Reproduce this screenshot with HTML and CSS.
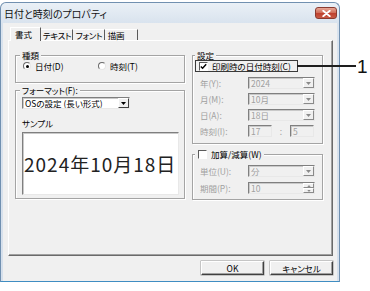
FILE: index.html
```html
<!DOCTYPE html>
<html lang="ja">
<head>
<meta charset="utf-8">
<title>日付と時刻のプロパティ</title>
<link rel="stylesheet" href="styles.css">
</head>
<body>
<div class="stage">
  <div class="window">
    <div class="titlebar">
      <span class="title">日付と時刻のプロパティ</span>
      <span class="close"><svg width="9" height="7" viewBox="0 0 9 7"><path d="M1.2 0.8 L7.8 6.2 M7.8 0.8 L1.2 6.2" stroke="#fff" stroke-width="1.8" stroke-linecap="round"/></svg></span>
    </div>
    <div class="client">
      <div class="tabs">
        <span class="tab active t1">書式</span>
        <span class="tab t2">テキスト</span>
        <span class="tab t3">フォント</span>
        <span class="tab t4">描画</span>
      </div>
      <div class="panel">
        <div class="col col-left">
          <fieldset class="group kind">
            <legend>種類</legend>
            <div class="radios">
              <span class="radio r1"><span class="dot on"></span>日付(D)</span>
              <span class="radio r2"><span class="dot"></span>時刻(T)</span>
            </div>
          </fieldset>
          <fieldset class="group format">
            <legend>フォーマット(F):</legend>
            <div class="combo enabled fmt">
              <span class="val">OSの設定 (長い形式)</span>
              <span class="arrow"><svg width="5" height="3" viewBox="0 0 5 3"><path d="M0 0 H5 L2.5 3 Z" fill="#000"/></svg></span>
            </div>
            <div class="caption">サンプル</div>
            <div class="sample">2024年10月18日</div>
          </fieldset>
        </div>
        <div class="col col-right">
          <fieldset class="group settings">
            <legend>設定</legend>
            <div class="check-row focus">
              <span class="box"><svg width="7" height="7" viewBox="0 0 7 7"><path d="M0.8 3.4 L2.6 5.3 L6.2 1.2" stroke="#000" stroke-width="1.4" fill="none"/></svg></span>
              <span class="check-text">印刷時の日付時刻(C)</span>
            </div>
            <div class="row first">
              <span class="lbl">年(Y):</span>
              <div class="combo"><span class="val">2024</span><span class="arrow"><svg width="5" height="3" viewBox="0 0 5 3"><path d="M0 0 H5 L2.5 3 Z" fill="#8a8a8a"/></svg></span></div>
            </div>
            <div class="row">
              <span class="lbl">月(M):</span>
              <div class="combo"><span class="val">10月</span><span class="arrow"><svg width="5" height="3" viewBox="0 0 5 3"><path d="M0 0 H5 L2.5 3 Z" fill="#8a8a8a"/></svg></span></div>
            </div>
            <div class="row">
              <span class="lbl">日(A):</span>
              <div class="combo"><span class="val">18日</span><span class="arrow"><svg width="5" height="3" viewBox="0 0 5 3"><path d="M0 0 H5 L2.5 3 Z" fill="#8a8a8a"/></svg></span></div>
            </div>
            <div class="row">
              <span class="lbl">時刻(I):</span>
              <div class="field small"><span class="val">17</span></div>
              <span class="colon">:</span>
              <div class="field small"><span class="val">5</span></div>
            </div>
          </fieldset>
          <fieldset class="group add">
            <legend><span class="box empty"></span><span class="legend-text">加算/減算(W)</span></legend>
            <div class="row first">
              <span class="lbl">単位(U):</span>
              <div class="combo"><span class="val">分</span><span class="arrow"><svg width="5" height="3" viewBox="0 0 5 3"><path d="M0 0 H5 L2.5 3 Z" fill="#8a8a8a"/></svg></span></div>
            </div>
            <div class="row">
              <span class="lbl">期間(P):</span>
              <div class="combo spin"><span class="val">10</span>
                <span class="spinner">
                  <span class="sbtn"><svg width="5" height="3" viewBox="0 0 5 3"><path d="M0 3 H5 L2.5 0 Z" fill="#8a8a8a"/></svg></span>
                  <span class="sbtn"><svg width="5" height="3" viewBox="0 0 5 3"><path d="M0 0 H5 L2.5 3 Z" fill="#8a8a8a"/></svg></span>
                </span>
              </div>
            </div>
          </fieldset>
        </div>
      </div>
      <div class="buttons">
        <span class="btn">OK</span>
        <span class="btn">キャンセル</span>
      </div>
    </div>
  </div>
  <div class="callout">
    <span class="leader"></span>
    <span class="num">1</span>
  </div>
</div>
</body>
</html>
```

FILE: styles.css
```css
* { box-sizing: border-box; }
html, body { margin: 0; padding: 0; }
body {
  width: 370px;
  height: 291px;
  overflow: hidden;
  background: #ffffff;
  font-family: "Noto Sans CJK JP", "Noto Sans", sans-serif;
  font-feature-settings: "palt";
  font-size: 8.5px;
  color: #000;
}
.stage {
  position: relative;
  width: 370px;
  height: 291px;
  padding-top: 2px;
}
.window {
  width: 340px;
  border: 1px solid #7190b0;
  border-bottom-color: #3f8dc2;
  border-radius: 6px 6px 0 0;
  background: linear-gradient(#eaf0f6, #d9e3ee 20px, #d6e0ec);
  padding: 0 2px 0 2px;
}
.titlebar {
  height: 20px;
  margin: 0 -2px;
  padding: 0 2px 0 3px;
  display: flex;
  justify-content: space-between;
  align-items: flex-start;
}
.title {
  font-size: 10px;
  line-height: 20px;
  padding-top: 1px;
  color: #111;
}
.close {
  width: 22px;
  height: 12px;
  margin-top: 4px;
  border-radius: 3px;
  border: 1px solid #8a3b30;
  background: linear-gradient(#e8a796, #d0705c 45%, #bf4230 55%, #c85a45);
  display: flex;
  align-items: center;
  justify-content: center;
}
.client {
  background: #f0f0f0;
  padding: 4px 4px 6px 5px;
}
.tabs {
  display: flex;
  align-items: flex-end;
  height: 13px;
  margin-left: 2px;
  position: relative;
  z-index: 1;
}
.tab {
  height: 11px;
  line-height: 9px;
  padding-top: 1px;
  text-align: center;
  border-top: 1px solid #ffffff;
  border-right: 1px solid #5a5a5a;
  color: #000;
  letter-spacing: -0.3px;
}
.tab.active {
  height: 14px;
  margin-bottom: -1px;
  line-height: 11px;
  border-left: 1px solid #ffffff;
  background: #f0f0f0;
  padding-right: 4px;
  letter-spacing: 0;
}
.t1 { width: 31px; }
.t2 { width: 32px; padding-left: 1px; }
.t3 { width: 32px; padding-left: 1px; }
.t4 { width: 33px; padding-right: 10px; }
.panel {
  height: 216px;
  border: 1px solid;
  border-color: #ffffff #6a6a6a #6a6a6a #ffffff;
  box-shadow: inset -1px -1px 0 #a0a0a0;
  display: flex;
  gap: 7px;
  padding: 8px 0 0 6px;
}
.col { display: flex; flex-direction: column; }
.col-left { width: 170px; }
.col-right { width: 131px; }
.group {
  margin: 0;
  min-width: 0;
  border: 1px solid #a4a4a4;
  box-shadow: inset 1px 1px 0 #ffffff, 1px 1px 0 #ffffff;
}
.group legend {
  padding: 0 2px;
  margin-left: -2px;
  line-height: 12px;
  background: #f0f0f0;
  display: flex;
  align-items: center;
}
.kind {
  height: 34px;
  padding: 0 6px;
}
.radios {
  display: flex;
  height: 12px;
  line-height: 12px;
  margin-top: -1px;
}
.radio { display: flex; align-items: center; }
.r1 { width: 75px; margin-left: 1px; }
.dot {
  width: 8px;
  height: 8px;
  border-radius: 50%;
  border: 1px solid;
  border-color: #6a6a6a #e6e6e6 #e6e6e6 #6a6a6a;
  background: #ffffff;
  margin-right: 4px;
  display: flex;
  align-items: center;
  justify-content: center;
}
.dot.on::after {
  content: "";
  width: 3px;
  height: 3px;
  border-radius: 50%;
  background: #000;
}
.format {
  margin-top: 1px;
  padding: 0 5px 3px 6px;
}
.combo, .field {
  height: 12px;
  border: 1px solid;
  border-color: #7f7f7f #e8e8e8 #e8e8e8 #7f7f7f;
  box-shadow: inset 1px 1px 0 #c9c9c9;
  background: #f0f0f0;
  color: #a0a0a0;
  display: flex;
  align-items: center;
  line-height: 10px;
}
.combo .val, .field .val { flex: 1; padding-left: 2px; white-space: nowrap; overflow: hidden; }
.combo { width: 67px; }
.combo.enabled {
  background: #ffffff;
  color: #000;
}
.combo.fmt { width: 108px; margin-top: 1px; }
.arrow {
  width: 11px;
  height: 10px;
  border: 1px solid;
  border-color: #ffffff #8a8a8a #8a8a8a #ffffff;
  background: #f0f0f0;
  display: flex;
  align-items: center;
  justify-content: center;
  flex: none;
}
.enabled .arrow {
  border-color: #ffffff #404040 #404040 #ffffff;
}
.caption {
  margin-top: 8px;
  line-height: 12px;
}
.sample {
  margin-top: 3px;
  width: 157px;
  height: 63px;
  border: 1px solid;
  border-color: #7f7f7f #e8e8e8 #e8e8e8 #7f7f7f;
  box-shadow: inset 1px 1px 0 #c9c9c9;
  background: #ffffff;
  display: flex;
  align-items: center;
  padding-left: 1px;
  font-size: 19px;
  letter-spacing: 1px;
  color: #222;
  white-space: nowrap;
  font-feature-settings: normal;
}
.settings {
  height: 95px;
  padding: 0 6px 0 4px;
}
.check-row {
  display: flex;
  align-items: center;
  height: 12px;
  line-height: 10px;
}
.focus {
  width: 103px;
  margin-left: -2px;
  margin-top: -1px;
  border: 1px solid #3a3a3a;
  padding-left: 3px;
}
.box {
  width: 9px;
  height: 9px;
  border: 1px solid;
  border-color: #5a5a5a #ffffff #ffffff #5a5a5a;
  background: #ffffff;
  display: flex;
  align-items: center;
  justify-content: center;
  margin-right: 4px;
  flex: none;
}
.add .box { margin-left: 1px; }
.row {
  display: flex;
  align-items: center;
  height: 12px;
  margin-top: 4px;
}
.settings .row.first { margin-top: 5px; }
.add .row { margin-top: 5px; }
.lbl {
  width: 51px;
  padding-left: 3px;
  color: #a0a0a0;
  line-height: 12px;
  white-space: nowrap;
}
.field.small { width: 24px; }
.colon {
  width: 18px;
  text-align: center;
  color: #a0a0a0;
}
.add {
  margin-top: 4px;
  padding: 0 6px 5px 4px;
}
.spinner {
  width: 11px;
  height: 10px;
  display: flex;
  flex-direction: column;
  flex: none;
}
.sbtn {
  flex: 1;
  border: 1px solid;
  border-color: #ffffff #8a8a8a #8a8a8a #ffffff;
  display: flex;
  align-items: center;
  justify-content: center;
}
.sbtn svg { width: 4px; height: 2px; }
.buttons {
  display: flex;
  justify-content: flex-end;
  gap: 6px;
  margin-top: 5px;
}
.btn {
  width: 63px;
  height: 14px;
  border: 1px solid;
  border-color: #ffffff #404040 #404040 #ffffff;
  box-shadow: inset -1px -1px 0 #a0a0a0, 0 0 0 0.5px #9a9a9a;
  background: #f0f0f0;
  text-align: center;
  line-height: 12px;
}
.callout { position: absolute; left: 0; top: 0; }
.leader {
  position: absolute;
  left: 297px;
  top: 65px;
  width: 59px;
  height: 1.5px;
  background: #1e1e1e;
}
.num {
  position: absolute;
  left: 357px;
  top: 57px;
  font-family: "Liberation Sans", Arial, sans-serif;
  font-size: 19px;
  line-height: 19px;
  color: #111;
}
```
